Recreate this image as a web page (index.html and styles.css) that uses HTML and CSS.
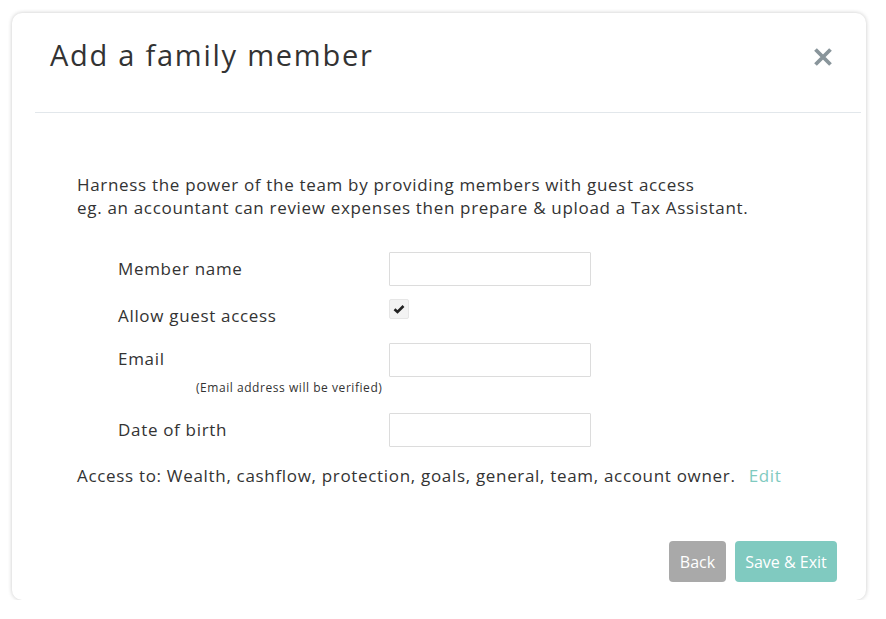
FILE: index.html
```html
<!DOCTYPE html>
<html lang="en">
<head>
<meta charset="utf-8">
<title>Add a family member</title>
<link rel="stylesheet" href="styles.css">
</head>
<body>
<div class="modal">
  <div class="modal-header">
    <h1 class="title">Add a family member</h1>
    <button class="close" aria-label="Close">
      <svg width="20" height="18" viewBox="0 0 20 18"><path d="M2.5 1.5 L17.5 16.5 M17.5 1.5 L2.5 16.5" stroke="#89959b" stroke-width="3.8" stroke-linecap="butt"/></svg>
    </button>
  </div>
  <div class="divider"></div>
  <div class="modal-body">
    <p class="intro">Harness the power of the team by providing members with guest access<br>eg. an accountant can review expenses then prepare &amp; upload a Tax Assistant.</p>
    <div class="form">
      <div class="row">
        <label class="label">Member name</label>
        <input class="input" type="text">
      </div>
      <div class="row row-check">
        <label class="label">Allow guest access</label>
        <span class="checkbox">
          <svg width="12" height="10" viewBox="0 0 12 10"><path d="M1.5 5.2 L4.5 8 L10.5 2" fill="none" stroke="#222" stroke-width="2.6"/></svg>
        </span>
      </div>
      <div class="row row-email">
        <div class="label-group">
          <label class="label">Email</label>
          <span class="hint">(Email address will be verified)</span>
        </div>
        <input class="input" type="text">
      </div>
      <div class="row row-dob">
        <label class="label">Date of birth</label>
        <input class="input" type="text">
      </div>
    </div>
    <p class="access">Access to: Wealth, cashflow, protection, goals, general, team, account owner. <a class="edit" href="#">Edit</a></p>
  </div>
  <div class="modal-footer">
    <button class="btn btn-back">Back</button>
    <button class="btn btn-save">Save &amp; Exit</button>
  </div>
</div>
</body>
</html>
```
FILE: styles.css
```css
* { box-sizing: border-box; }
html, body { margin: 0; padding: 0; background: #fff; }
body {
  font-family: "Open Sans", "Lato", sans-serif;
  color: #333;
  padding: 13px 0 0 12px;
}
.modal {
  width: 854px;
  height: 587px;
  background: #fff;
  border-radius: 10px;
  box-shadow: 0 0 4px rgba(0,0,0,0.22);
  display: flex;
  flex-direction: column;
}
.modal-header {
  height: 99px;
  display: flex;
  align-items: flex-start;
  justify-content: space-between;
  padding: 22px 33px 0 38px;
}
.title {
  margin: 0;
  font-weight: 400;
  font-size: 29px;
  letter-spacing: 1.75px;
  line-height: 40px;
  color: #333;
}
.close {
  border: 0;
  background: none;
  padding: 0;
  margin-top: 13px;
  width: 20px;
  height: 18px;
  display: flex;
  align-items: center;
  justify-content: center;
}
.divider {
  height: 1px;
  background: #e2e7eb;
  margin: 0 5px 0 23px;
}
.modal-body {
  padding: 60px 0 0 65px;
  font-size: 17px;
  letter-spacing: 0.68px;
}
.intro {
  margin: 0;
  line-height: 23px;
}
.form {
  margin: 33px 0 0 41px;
  display: flex;
  flex-direction: column;
}
.row {
  display: grid;
  grid-template-columns: 271px 202px;
  align-items: center;
}
.label { line-height: 22px; }
.input {
  width: 202px;
  height: 34px;
  border: 1px solid #dcdcdc;
  border-radius: 1px;
  background: #fff;
  margin: 0;
}
.row-check { margin-top: 13px; align-items: start; }
.row-check .label { margin-top: 6px; }
.checkbox {
  width: 20px;
  height: 20px;
  background: #f3f3f3;
  border: 1px solid #e6e6e6;
  border-radius: 2px;
  display: flex;
  align-items: center;
  justify-content: center;
}
.row-email { margin-top: 16px; align-items: start; }
.label-group { display: flex; flex-direction: column; }
.row-email .label { margin-top: 5px; }
.hint {
  font-size: 12px;
  letter-spacing: 0.55px;
  line-height: 16px;
  margin: 10px 0 0 78px;
  white-space: nowrap;
}
.row-dob { margin-top: 17px; }
.access {
  margin: 18px 0 0 0;
  line-height: 22px;
}
.edit {
  color: #7fcac0;
  text-decoration: none;
  margin-left: 8px;
}
.modal-footer {
  margin-top: auto;
  padding: 0 29px 18px 0;
  display: flex;
  justify-content: flex-end;
  gap: 9px;
}
.btn {
  border: 0;
  border-radius: 4px;
  color: #fff;
  font-family: inherit;
  font-size: 16px;
  height: 41px;
  padding: 0;
  white-space: nowrap;
}
.btn-back { background: #a9a9a9; width: 57px; }
.btn-save { background: #80cac0; width: 102px; }
```
